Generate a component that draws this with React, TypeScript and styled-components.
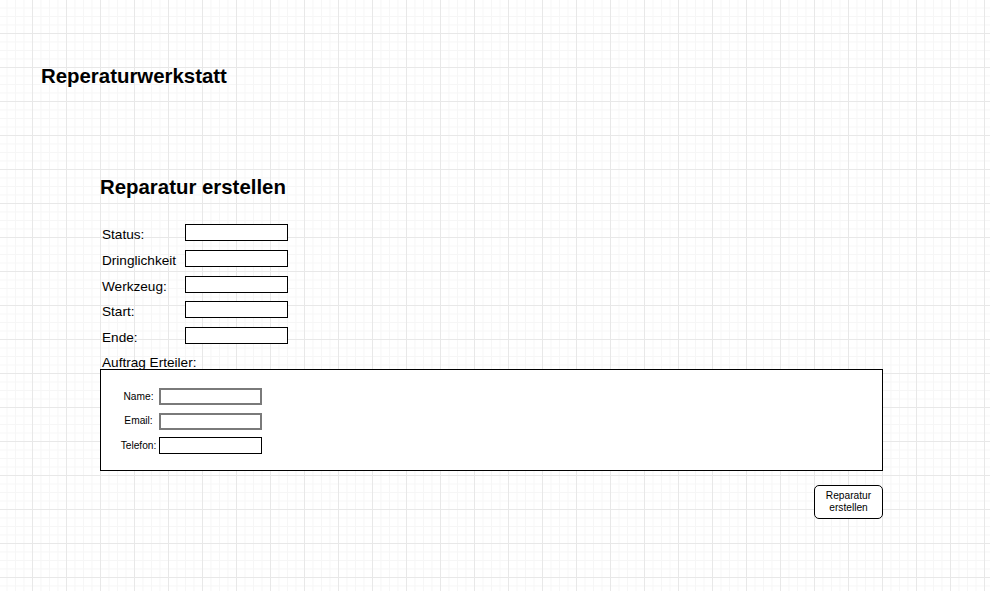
import React from 'react';
import styled, { createGlobalStyle } from 'styled-components';

const GlobalStyle = createGlobalStyle`
  html, body {
    margin: 0;
    padding: 0;
  }
  body {
    font-family: "Liberation Sans", Helvetica, Arial, sans-serif;
    color: #000;
    background-color: #fff;
  }
`;

// draw.io style canvas grid (zoom 0.85: 8.5px cells, 34px blocks)
const Canvas = styled.div`
  min-height: 100vh;
  box-sizing: border-box;
  padding: 66px 0 0 41px;
  background-color: #fff;
  background-image:
    linear-gradient(to right, #e8e8e8 1px, transparent 1px),
    linear-gradient(to bottom, #e8e8e8 1px, transparent 1px),
    linear-gradient(to right, #f6f6f6 1px, transparent 1px),
    linear-gradient(to bottom, #f6f6f6 1px, transparent 1px);
  background-size: 34px 34px, 34px 34px, 8.5px 8.5px, 8.5px 8.5px;
  background-position: 32px 33px, 32px 33px, 32px 33px, 32px 33px;
`;

const AppTitle = styled.h1`
  margin: 0;
  font-size: 20.4px;
  line-height: 20.4px;
  font-weight: bold;
`;

const Panel = styled.section`
  width: 783px;
  margin: 90.6px 0 0 59px;
`;

const PanelTitle = styled.h2`
  margin: 0;
  font-size: 20.4px;
  line-height: 20.4px;
  font-weight: bold;
`;

const FieldList = styled.div`
  display: grid;
  row-gap: 8.7px;
  margin-top: 27px;
  padding-left: 2px;
`;

const FieldRow = styled.div`
  display: flex;
  align-items: flex-end;
  height: 17px;
`;

const FieldLabel = styled.span`
  width: 83px;
  font-size: 13.6px;
  line-height: 12px;
  white-space: nowrap;
`;

const TextBox = styled.div<{ $tone?: 'dark' | 'soft' }>`
  box-sizing: border-box;
  width: 103px;
  height: 17px;
  background: #fff;
  border: ${({ $tone }) => ($tone === 'soft' ? '2px solid #7a7a7a' : '1px solid #000')};
`;

const SectionLabel = styled.div`
  margin-top: 12.5px;
  padding-left: 2px;
  font-size: 13.6px;
  line-height: 11px;
`;

const ClientBox = styled.div`
  box-sizing: border-box;
  height: 102px;
  margin-top: 1.5px;
  padding: 18px 0 0 19px;
  border: 1px solid #000;
  background: #fff;
  display: grid;
  align-content: start;
  row-gap: 7.5px;
`;

const ClientRow = styled.div`
  display: flex;
  align-items: center;
  gap: 2px;
  height: 17px;
`;

const ClientLabel = styled.span`
  width: 37px;
  text-align: center;
  font-size: 10.2px;
  line-height: 12px;
  white-space: nowrap;
`;

const Actions = styled.div`
  display: flex;
  justify-content: flex-end;
  margin-top: 14px;
`;

const SubmitButton = styled.button`
  box-sizing: border-box;
  width: 69px;
  height: 34px;
  padding: 0;
  border: 1px solid #000;
  border-radius: 5px;
  background: #fff;
  color: #000;
  font-family: inherit;
  font-size: 10.2px;
  line-height: 11.7px;
  text-align: center;
`;

const fields = ['Status:', 'Dringlichkeit', 'Werkzeug:', 'Start:', 'Ende:'];

const clientFields: { label: string; tone: 'dark' | 'soft' }[] = [
  { label: 'Name:', tone: 'soft' },
  { label: 'Email:', tone: 'soft' },
  { label: 'Telefon:', tone: 'dark' },
];

export default function App() {
  return (
    <>
      <GlobalStyle />
      <Canvas>
        <AppTitle>Reperaturwerkstatt</AppTitle>
        <Panel>
          <PanelTitle>Reparatur erstellen</PanelTitle>
          <FieldList>
            {fields.map((label) => (
              <FieldRow key={label}>
                <FieldLabel>{label}</FieldLabel>
                <TextBox />
              </FieldRow>
            ))}
          </FieldList>
          <SectionLabel>Auftrag Erteiler:</SectionLabel>
          <ClientBox>
            {clientFields.map((f) => (
              <ClientRow key={f.label}>
                <ClientLabel>{f.label}</ClientLabel>
                <TextBox $tone={f.tone} />
              </ClientRow>
            ))}
          </ClientBox>
          <Actions>
            <SubmitButton>
              Reparatur
              <br />
              erstellen
            </SubmitButton>
          </Actions>
        </Panel>
      </Canvas>
    </>
  );
}
